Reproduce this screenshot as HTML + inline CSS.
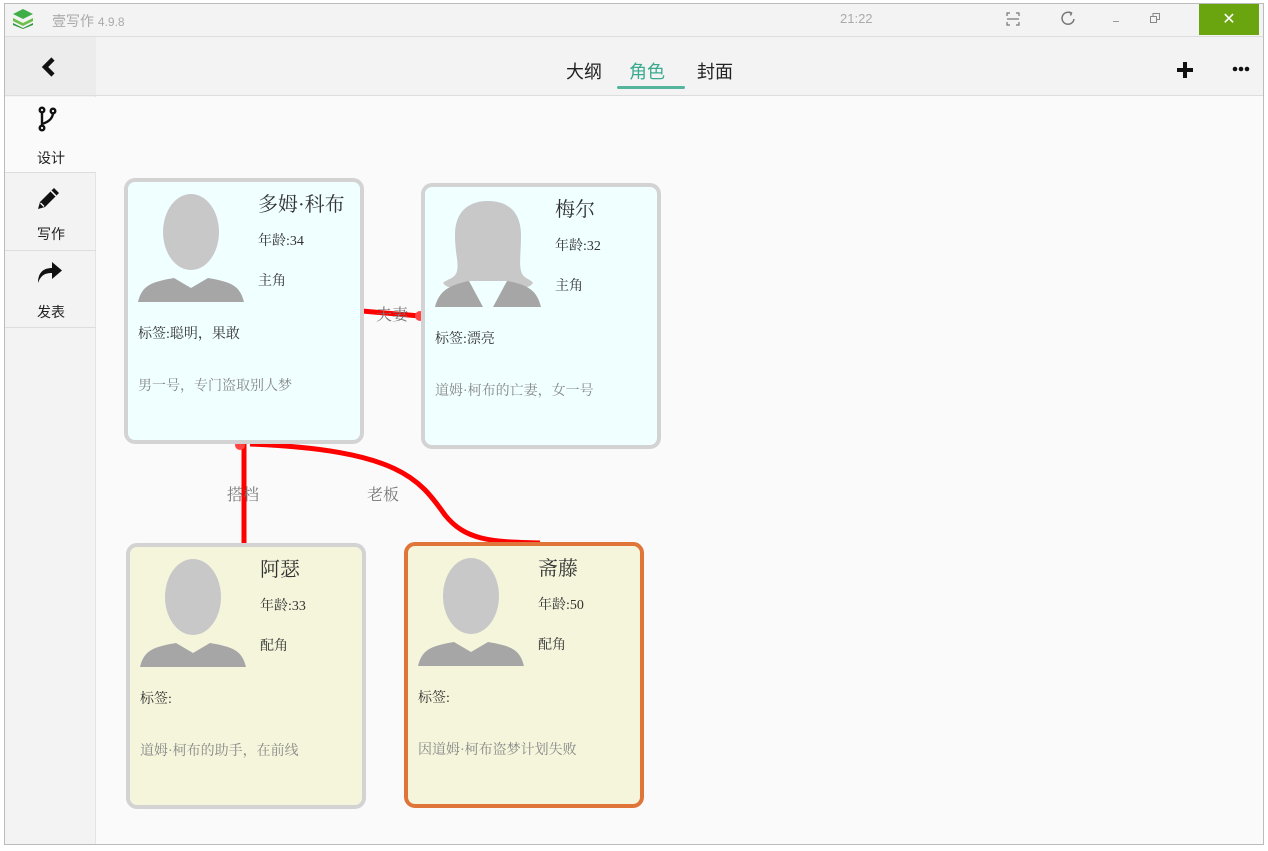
<!DOCTYPE html>
<html><head><meta charset="utf-8"><style>
*{margin:0;padding:0;box-sizing:border-box}
body{width:1268px;height:851px;background:#fff;position:relative;overflow:hidden;font-family:"Liberation Sans","Noto Sans CJK SC",sans-serif}
.abs{position:absolute}
.win{left:4px;top:3px;width:1260px;height:842px;border:1px solid #bbb;background:#fafafa}
.title{left:5px;top:4px;width:1258px;height:33px;background:#f3f3f3;border-bottom:1px solid #ddd}
.side{left:5px;top:37px;width:91px;height:807px;background:#f3f3f3;border-right:1px solid #e4e4e4}
.tool{left:96px;top:37px;width:1167px;height:59px;background:#f3f3f3;border-bottom:1px solid #ddd}
.card{position:absolute;width:240px;height:266px;border:4px solid #d3d3d3;border-radius:11px;font-family:"Liberation Serif","Noto Serif CJK SC",serif}
.card .nm{position:absolute;left:130px;top:6px;font-size:20px;color:#333}
.card .ag{position:absolute;left:130px;top:48px;font-size:14px;color:#333}
.card .rl{position:absolute;left:130px;top:88px;font-size:14px;color:#333}
.card .tg{position:absolute;left:10px;top:141px;font-size:14px;color:#333}
.card .ds{position:absolute;left:10px;top:193px;font-size:14px;color:#888}
.card svg{position:absolute;left:10px;top:10px}
.lbl{position:absolute;font-family:"Liberation Serif","Noto Serif CJK SC",serif;font-size:16px;color:#777}
</style></head><body>
<div class="abs win"></div>
<div class="abs title"></div>
<svg class="abs" style="left:12px;top:8px" width="22" height="22" viewBox="0 0 22 22"><path d="M11 1 L21 6 L11 11 L1 6Z" fill="#3fae49"/><path d="M1 10 L11 15 L21 10 L21 13 L11 18 L1 13Z" fill="#6cc04a"/><path d="M1 15 L11 20 L21 15 L21 17 L11 21 L1 17Z" fill="#2e9a3e"/></svg>
<div class="abs" style="left:52px;top:11px;font-size:14px;color:#aaa">壹写作 <span style="font-size:12px">4.9.8</span></div>
<div class="abs" style="left:840px;top:11px;font-size:13px;color:#aaa">21:22</div>
<svg class="abs" style="left:1006px;top:12px" width="14" height="14" viewBox="0 0 14 14" fill="none" stroke="#777" stroke-width="1.2"><path d="M1 4V1H4M10 1H13V4M13 10V13H10M4 13H1V10M1 7H13"/></svg>
<svg class="abs" style="left:1060px;top:10px" width="16" height="16" viewBox="0 0 16 16" fill="none" stroke="#777" stroke-width="1.5"><path d="M11 3A6 6 0 1 0 14 9"/><path d="M9 2L11.5 3L10.5 5.5"/></svg>
<div class="abs" style="left:1113px;top:21px;width:6px;height:1px;background:#999"></div>
<svg class="abs" style="left:1150px;top:13px" width="10" height="10" viewBox="0 0 10 10" fill="none" stroke="#888"><rect x="0.5" y="3.5" width="6" height="6"/><path d="M3 3.5V0.5H9.5V6.5H6.5"/></svg>
<div class="abs" style="left:1199px;top:4px;width:60px;height:31px;background:#6aa40f;color:#fff;text-align:center;font-size:16px;line-height:31px">✕</div>
<div class="abs side"></div>
<div class="abs" style="left:5px;top:37px;width:91px;height:59px;background:#ececec;border-bottom:1px solid #ddd"></div>
<svg class="abs" style="left:41px;top:57px" width="16" height="20" viewBox="0 0 16 20"><path d="M12 2L4 10L12 18" stroke="#111" stroke-width="4.5" fill="none"/></svg>
<div class="abs" style="left:5px;top:97px;width:91px;height:76px;background:#fafafa;border-bottom:1px solid #ddd"></div>
<svg class="abs" style="left:38px;top:106px" width="20" height="27" viewBox="0 0 20 27" fill="none" stroke="#111" stroke-width="2.4"><circle cx="4" cy="4" r="2.3"/><circle cx="15" cy="5" r="2.3"/><circle cx="4" cy="22" r="2.3"/><path d="M4 6.5V19.5M4 18Q14 15 15 7.5"/></svg>
<div class="abs" style="left:37px;top:148px;font-size:14px;color:#222">设计</div>
<div class="abs" style="left:5px;top:250px;width:91px;height:1px;background:#ddd"></div>
<div class="abs" style="left:5px;top:327px;width:91px;height:1px;background:#ddd"></div>
<svg class="abs" style="left:36px;top:185px" width="26" height="26" viewBox="0 0 26 26"><path d="M2 24L4 17L18 3L23 8L9 22Z" fill="#111"/><path d="M15 6L20 11" stroke="#fff" stroke-width="1.5"/><path d="M4.5 18L8 21.5" stroke="#fff" stroke-width="1.3"/></svg>
<div class="abs" style="left:37px;top:224px;font-size:14px;color:#222">写作</div>
<svg class="abs" style="left:36px;top:260px" width="28" height="24" viewBox="0 0 28 24"><path d="M2 23C2 12 8 8 16 8V2L26 10.5L16 19V13C9 13 5 15 2 23Z" fill="#111"/></svg>
<div class="abs" style="left:37px;top:302px;font-size:14px;color:#222">发表</div>
<div class="abs tool"></div>
<div class="abs" style="left:566px;top:58px;font-size:18px;color:#222">大纲</div>
<div class="abs" style="left:629px;top:58px;font-size:18px;color:#3aaa90">角色</div>
<div class="abs" style="left:617px;top:86px;width:68px;height:3px;background:#55b59c;border-radius:2px"></div>
<div class="abs" style="left:697px;top:58px;font-size:18px;color:#222">封面</div>
<svg class="abs" style="left:1176px;top:61px" width="18" height="18" viewBox="0 0 18 18"><path d="M9 1V17M1 9H17" stroke="#111" stroke-width="4"/></svg>
<svg class="abs" style="left:1232px;top:66px" width="18" height="6" viewBox="0 0 18 6" fill="#111"><circle cx="3" cy="3" r="2.3"/><circle cx="9" cy="3" r="2.3"/><circle cx="15" cy="3" r="2.3"/></svg>

<svg class="abs" style="left:0;top:0" width="1268" height="851">
<path d="M362 311 L420 316" stroke="#f00" stroke-width="5" fill="none"/>
<path d="M244 442 L244 545" stroke="#f00" stroke-width="5" fill="none"/>
<path d="M250 444 C400 450 420 480 445 515 C465 540 490 542 540 543" stroke="#f00" stroke-width="5" fill="none"/>
<circle cx="240" cy="445" r="5" fill="#f44"/>
<circle cx="420" cy="316" r="5" fill="#f44"/>
</svg>

<div class="card" style="left:124px;top:178px;background:#f0ffff">
<svg width="110" height="112" viewBox="0 0 110 112"><ellipse cx="53" cy="40" rx="28" ry="38" fill="#c8c8c8"/><path d="M0 110 C4 94 12 90 36 86 L53 96 L70 86 C94 90 102 94 106 110Z" fill="#a6a6a6"/></svg>
<div class="nm">多姆·科布</div><div class="ag">年龄:34</div><div class="rl">主角</div>
<div class="tg">标签:聪明，果敢</div><div class="ds">男一号，专门盗取别人梦</div></div>

<div class="card" style="left:421px;top:183px;background:#f0ffff">
<svg width="110" height="112" viewBox="0 0 110 112"><path d="M53 4 C74 4 86 16 86 38 C86 56 84 66 86 74 C88 82 96 82 98 86 C92 94 80 90 72 84 L34 84 C26 90 14 94 8 86 C12 82 20 82 22 74 C24 66 20 56 20 38 C20 16 32 4 53 4Z" fill="#c8c8c8"/><path d="M0 110 C4 94 14 88 34 84 L48 110Z M58 110 L72 84 C94 88 102 94 106 110Z" fill="#a6a6a6"/></svg>
<div class="nm">梅尔</div><div class="ag">年龄:32</div><div class="rl">主角</div>
<div class="tg">标签:漂亮</div><div class="ds">道姆·柯布的亡妻，女一号</div></div>

<div class="card" style="left:126px;top:543px;background:#f5f5dc">
<svg width="110" height="112" viewBox="0 0 110 112"><ellipse cx="53" cy="40" rx="28" ry="38" fill="#c8c8c8"/><path d="M0 110 C4 94 12 90 36 86 L53 96 L70 86 C94 90 102 94 106 110Z" fill="#a6a6a6"/></svg>
<div class="nm">阿瑟</div><div class="ag">年龄:33</div><div class="rl">配角</div>
<div class="tg">标签:</div><div class="ds">道姆·柯布的助手，在前线</div></div>

<div class="card" style="left:404px;top:542px;background:#f5f5dc;border-color:#e0753a">
<svg width="110" height="112" viewBox="0 0 110 112"><ellipse cx="53" cy="40" rx="28" ry="38" fill="#c8c8c8"/><path d="M0 110 C4 94 12 90 36 86 L53 96 L70 86 C94 90 102 94 106 110Z" fill="#a6a6a6"/></svg>
<div class="nm">斋藤</div><div class="ag">年龄:50</div><div class="rl">配角</div>
<div class="tg">标签:</div><div class="ds">因道姆·柯布盗梦计划失败</div></div>

<div class="lbl" style="left:376px;top:302px">夫妻</div>
<div class="lbl" style="left:227px;top:482px">搭档</div>
<div class="lbl" style="left:367px;top:482px">老板</div>
</body></html>
